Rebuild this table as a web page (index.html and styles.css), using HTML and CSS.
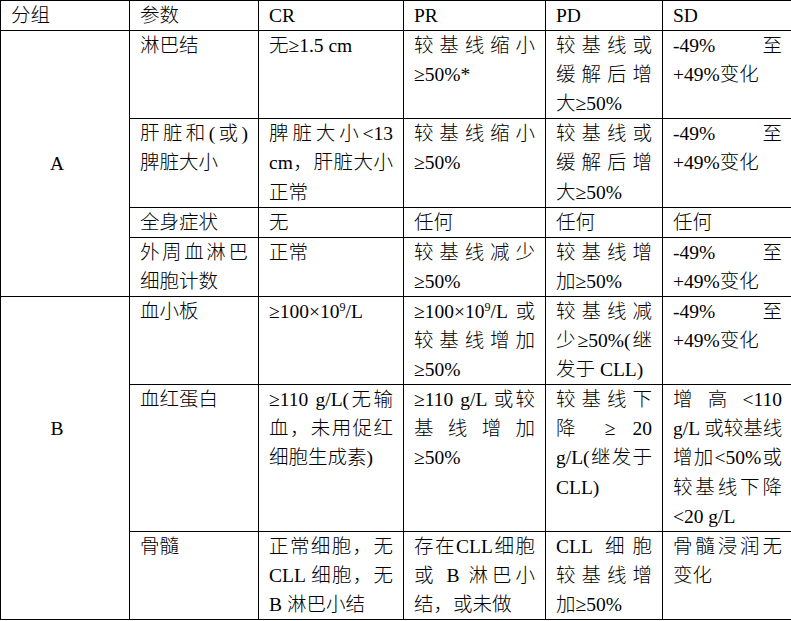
FILE: index.html
```html
<!DOCTYPE html>
<html lang="zh-CN">
<head>
<meta charset="utf-8">
<title>疗效评估标准</title>
<link rel="stylesheet" href="styles.css">
</head>
<body>
<table class="crit">
  <colgroup>
    <col class="w-grp"><col class="w-par"><col class="w-cr"><col class="w-pr"><col class="w-pd"><col class="w-sd">
  </colgroup>
  <thead>
    <tr>
      <th>分组</th><th>参数</th><th>CR</th><th>PR</th><th>PD</th><th>SD</th>
    </tr>
  </thead>
  <tbody>
    <tr>
      <td class="grp grp-a" rowspan="4">A</td>
      <td>淋巴结</td>
      <td>无≥1.5 cm</td>
      <td>较基线缩小≥50%*</td>
      <td>较基线或缓解后增大≥50%</td>
      <td>-49%至<span class="nw">+49%变化</span></td>
    </tr>
    <tr>
      <td>肝脏和(或)脾脏大小</td>
      <td>脾脏大小&lt;13 cm，肝脏大小正常</td>
      <td>较基线缩小≥50%</td>
      <td>较基线或缓解后增大≥50%</td>
      <td>-49%至<span class="nw">+49%变化</span></td>
    </tr>
    <tr>
      <td>全身症状</td>
      <td>无</td>
      <td>任何</td>
      <td>任何</td>
      <td>任何</td>
    </tr>
    <tr>
      <td>外周血淋巴细胞计数</td>
      <td>正常</td>
      <td>较基线减少≥50%</td>
      <td>较基线增加≥50%</td>
      <td>-49%至<span class="nw">+49%变化</span></td>
    </tr>
    <tr>
      <td class="grp grp-b" rowspan="3">B</td>
      <td>血小板</td>
      <td>≥100×10<sup>9</sup>/L</td>
      <td>≥100×10<sup>9</sup>/L 或较基线增加≥50%</td>
      <td>较基线减少≥50%(继发于 CLL)</td>
      <td>-49%至<span class="nw">+49%变化</span></td>
    </tr>
    <tr>
      <td>血红蛋白</td>
      <td>≥110 g/L(无输血，未用促红细胞生成素)</td>
      <td>≥110 g/L 或较基线增加≥50%</td>
      <td>较基线下降 ≥ 20 g/L(继发于 CLL)</td>
      <td>增高&lt;110 <span class="nw">g/L 或较基线</span>增加&lt;50%或较基线下降<span class="nw">&lt;20 g/L</span></td>
    </tr>
    <tr>
      <td>骨髓</td>
      <td>正常细胞，无 CLL 细胞，无 B 淋巴小结</td>
      <td>存在CLL细胞或 B 淋巴小结，或未做</td>
      <td>CLL 细胞较基线增加≥50%</td>
      <td>骨髓浸润无变化</td>
    </tr>
  </tbody>
</table>
</body>
</html>
```
FILE: styles.css
```css
html, body {
  margin: 0;
  padding: 0;
  background: #fff;
  overflow: hidden;
}

.crit {
  border-collapse: collapse;
  table-layout: fixed;
  width: 792px;
  font-family: "Liberation Serif", "Noto Sans CJK SC", serif;
  font-size: 19.5px;
  font-weight: 300;
  line-height: 29.1px;
  color: #000;
}

.w-grp { width: 129px; }
.w-par { width: 129px; }
.w-cr  { width: 145px; }
.w-pr  { width: 142px; }
.w-pd  { width: 117px; }
.w-sd  { width: 130px; }

.crit th,
.crit td {
  border: 1px solid #000;
  padding: 0 10px;
  vertical-align: top;
  text-align: justify;
  font-weight: 300;
}

.crit th {
  text-align: left;
}

.crit .grp {
  vertical-align: middle;
  text-align: center;
  padding-right: 26px;
}

.crit .grp-b {
  padding-bottom: 59px;
}

.nw {
  white-space: nowrap;
}

.crit sup {
  font-size: 0.62em;
  line-height: 0;
  vertical-align: 0.55em;
}
```
